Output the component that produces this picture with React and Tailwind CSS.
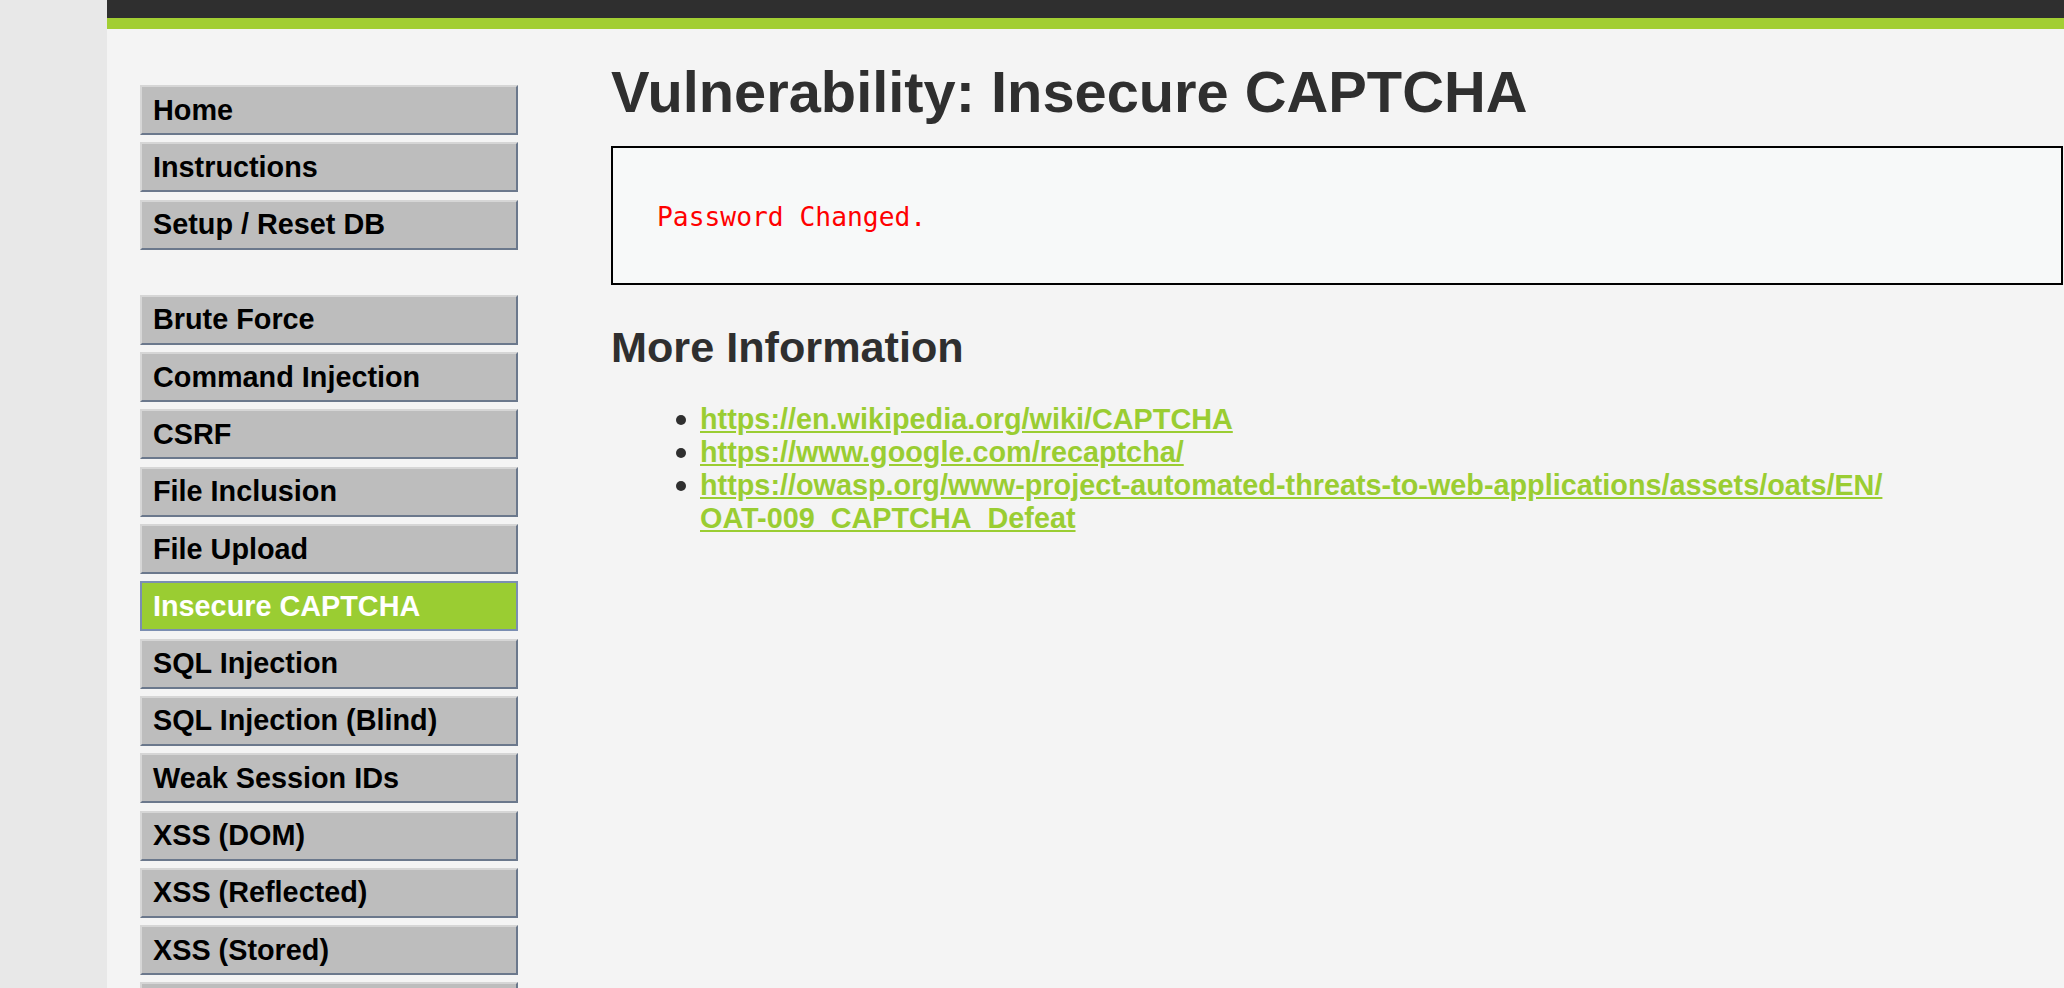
const menuTop = ["Home", "Instructions", "Setup / Reset DB"];

const menuVulns = [
  "Brute Force",
  "Command Injection",
  "CSRF",
  "File Inclusion",
  "File Upload",
  "Insecure CAPTCHA",
  "SQL Injection",
  "SQL Injection (Blind)",
  "Weak Session IDs",
  "XSS (DOM)",
  "XSS (Reflected)",
  "XSS (Stored)",
  "CSP Bypass",
];

const links = [
  ["https://en.wikipedia.org/wiki/CAPTCHA"],
  ["https://www.google.com/recaptcha/"],
  ["https://owasp.org/www-project-automated-threats-to-web-applications/assets/oats/EN/", "OAT-009_CAPTCHA_Defeat"],
];

const MenuItem = ({ label, selected }) => (
  <li className="mb-[7.3px]">
    <a
      href="#"
      className={
        selected
          ? "flex items-center h-[50px] pl-[11px] border-2 border-[#7b8eb2] bg-[#9acd32] text-white font-bold text-[28.8px] leading-[33px] no-underline"
          : "flex items-center h-[50px] pl-[11px] border-2 border-t-[#d6d6d6] border-l-[#d6d6d6] border-r-[#6b788c] border-b-[#6b788c] bg-[#bdbdbd] text-black font-bold text-[28.8px] leading-[33px] no-underline"
      }
    >
      {label}
    </a>
  </li>
);

const App = () => {
  return (
    <div className="min-h-screen flex bg-[#e8e8e8] font-['Liberation_Sans',Arial,sans-serif]">
      <div className="w-[107px] shrink-0" />

      <div className="flex-1 min-h-screen bg-[#f4f4f4]">
        {/* header strip */}
        <div className="h-[18px] bg-[#2f2f2f]" />
        <div className="h-[11px] bg-[#a2ce33]" />

        <div className="flex">
          {/* main menu */}
          <div className="w-[504px] shrink-0 pl-[33px] pt-[56px]">
            <ul className="w-[378px] pb-[38px]">
              {menuTop.map((item) => (
                <MenuItem key={item} label={item} />
              ))}
            </ul>
            <ul className="w-[378px]">
              {menuVulns.map((item) => (
                <MenuItem key={item} label={item} selected={item === "Insecure CAPTCHA"} />
              ))}
            </ul>
          </div>

          {/* main body */}
          <div className="flex-1 pr-[1px] pt-[30px]">
            <h1 className="text-[57.8px] leading-[66px] font-bold text-[#2f2f2f]">
              Vulnerability: Insecure CAPTCHA
            </h1>

            <div className="mt-[21px] h-[139px] border-2 border-black bg-[#f7f9f9] pl-[44px] pt-[54px]">
              <pre className="font-['DejaVu_Sans_Mono',monospace] text-[26.3px] leading-[30px] text-[#ff0000]">
                Password Changed.
              </pre>
            </div>

            <h2 className="mt-[37px] text-[43.2px] leading-[50px] font-bold text-[#2f2f2f]">
              More Information
            </h2>

            <ul className="mt-[31px]">
              {links.map((parts) => (
                <li key={parts[0]} className="flex items-start">
                  <span className="mt-[12px] ml-[65px] mr-[14px] w-[10px] h-[10px] shrink-0 rounded-full bg-[#2f2f2f]" />
                  <a
                    href="#"
                    className="text-[28.8px] leading-[33.1px] font-bold text-[#9acd32] underline"
                  >
                    {parts[0]}
                    {parts[1] && (
                      <>
                        <br />
                        {parts[1]}
                      </>
                    )}
                  </a>
                </li>
              ))}
            </ul>
          </div>
        </div>
      </div>
    </div>
  );
};

export default App;
